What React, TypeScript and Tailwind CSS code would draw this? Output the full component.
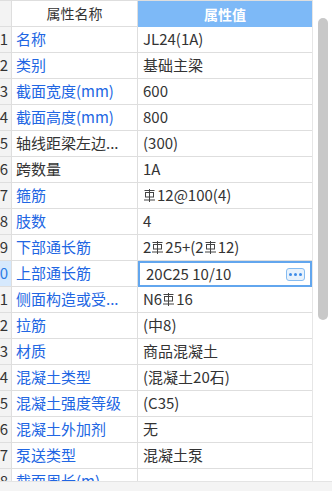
import React from "react";

type Row = { name: string; value: string; blue: boolean };

const rows: Row[] = [
  { name: "名称", value: "JL24(1A)", blue: true },
  { name: "类别", value: "基础主梁", blue: true },
  { name: "截面宽度(mm)", value: "600", blue: true },
  { name: "截面高度(mm)", value: "800", blue: true },
  { name: "轴线距梁左边...", value: "(300)", blue: false },
  { name: "跨数量", value: "1A", blue: false },
  { name: "箍筋", value: "\u{E000}12@100(4)", blue: true },
  { name: "肢数", value: "4", blue: true },
  { name: "下部通长筋", value: "2\u{E000}25+(2\u{E000}12)", blue: true },
  { name: "上部通长筋", value: "20C25 10/10", blue: true },
  { name: "侧面构造或受...", value: "N6\u{E000}16", blue: true },
  { name: "拉筋", value: "(中8)", blue: true },
  { name: "材质", value: "商品混凝土", blue: true },
  { name: "混凝土类型", value: "(混凝土20石)", blue: true },
  { name: "混凝土强度等级", value: "(C35)", blue: true },
  { name: "混凝土外加剂", value: "无", blue: true },
  { name: "泵送类型", value: "混凝土泵", blue: true },
  { name: "截面周长(m)", value: "", blue: true },
];

const font = { fontFamily: '"Noto Sans CJK SC", "Noto Sans", sans-serif' };

// grade-III rebar symbol
const Rebar = () => (
  <svg width="13" height="15" viewBox="0 0 13 15" className="inline-block align-[-2px] mr-[1px]">
    <g stroke="#444" strokeWidth="1" fill="none">
      <line x1="6.5" y1="1" x2="6.5" y2="14" />
      <rect x="2.5" y="4.5" width="8" height="4.5" />
      <line x1="1.5" y1="2.5" x2="11.5" y2="2.5" />
      <line x1="1" y1="12" x2="12" y2="12" />
    </g>
  </svg>
);

const renderValue = (v: string) =>
  v.split("\u{E000}").map((part, i) => (
    <React.Fragment key={i}>
      {i > 0 && <Rebar />}
      {part}
    </React.Fragment>
  ));

export default function App() {
  return (
    <div className="w-[332px] h-[491px] bg-white flex flex-col overflow-hidden" style={font}>
      <div className="flex h-[481px] overflow-hidden">
        <div className="w-[312px] flex flex-col shrink-0">
          {/* header */}
          <div className="flex h-[27px] shrink-0 border-t border-[#dedede]">
            <div className="w-[12px] bg-[#f3f3f3] border-r border-b border-[#dedede]" />
            <div className="w-[126px] flex items-center justify-center text-[14px] text-[#333] border-r border-b border-[#dedede]">
              属性名称
            </div>
            <div className="flex-1 flex items-center justify-center text-[14px] text-white bg-[#7db9f7] font-bold">
              属性值
            </div>
          </div>
          {rows.map((r, i) => {
            const sel = i === 9;
            return (
              <div key={i} className="flex h-[26px] shrink-0">
                <div
                  className={`w-[12px] overflow-hidden flex justify-end items-center text-[15px] border-r border-b border-[#dedede] ${
                    sel ? "bg-[#d6e9fd] text-[#2a7be4]" : "bg-[#f3f3f3] text-[#333]"
                  }`}
                >
                  <span className="whitespace-nowrap pr-[3px]">{i + 1}</span>
                </div>
                <div
                  className={`w-[126px] flex items-center pl-[4px] pr-[2px] text-[15px] border-r border-b border-[#dedede] overflow-hidden whitespace-nowrap ${
                    r.blue ? "text-[#2166e3]" : "text-[#333]"
                  }`}
                >
                  {r.name}
                </div>
                {sel ? (
                  <div className="flex-1 flex items-center justify-between border-2 border-[#62a6ee] pl-[6px] pr-[5px] text-[15px] text-[#333]">
                    <span>{r.value}</span>
                    <div className="w-[19px] h-[13px] rounded-[3px] border border-[#86bcf1] bg-[#e8f2fc] flex items-center justify-center gap-[2px]">
                      <span className="w-[3px] h-[3px] rounded-full bg-[#3e8ce8]" />
                      <span className="w-[3px] h-[3px] rounded-full bg-[#3e8ce8]" />
                      <span className="w-[3px] h-[3px] rounded-full bg-[#3e8ce8]" />
                    </div>
                  </div>
                ) : (
                  <div className="flex-1 flex items-center pl-[5px] text-[15px] text-[#333] border-b border-[#dedede] whitespace-nowrap">
                    {renderValue(r.value)}
                  </div>
                )}
              </div>
            );
          })}
        </div>
        <div className="flex-1 border-l border-[#e6e6e6] pl-[5px] pt-[18px]">
          <div className="w-[10px] h-[302px] rounded-full bg-[#c8c8c8]" />
        </div>
      </div>
      <div className="flex-1 bg-[#f4f4f4] border-t border-[#e4e4e4]" />
    </div>
  );
}
